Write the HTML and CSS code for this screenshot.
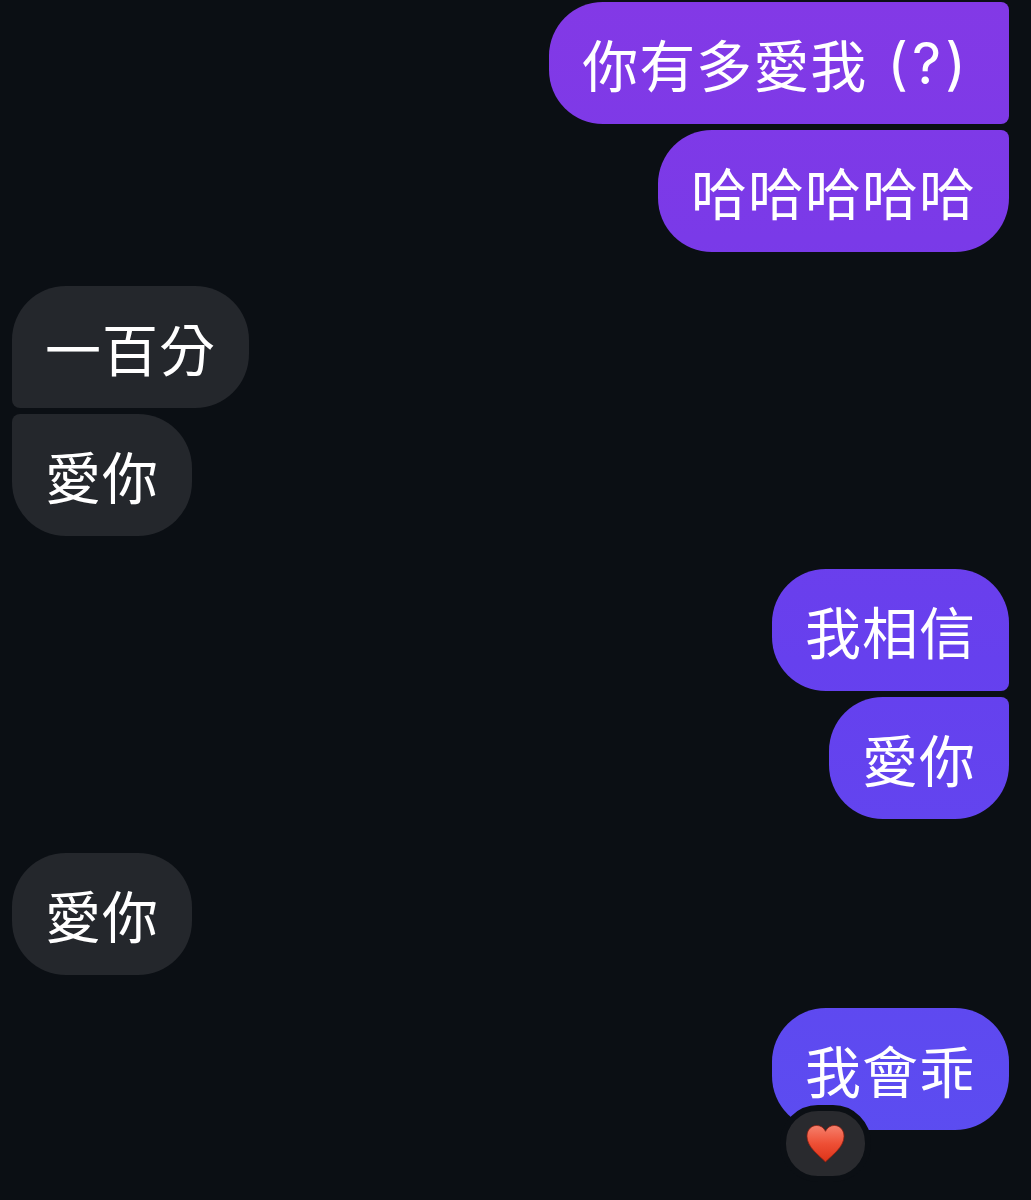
FILE: index.html
```html
<!DOCTYPE html>
<html lang="zh-Hant">
<head>
<meta charset="utf-8">
<title>Messages</title>
<link rel="stylesheet" href="styles.css">
</head>
<body>
<main class="thread">
  <section class="group group-sent">
    <div class="bubble sent first continued">你有多愛我<span class="latin">(?)</span></div>
    <div class="bubble sent last">哈哈哈哈哈</div>
  </section>
  <section class="group group-received">
    <div class="bubble received first">一百分</div>
    <div class="bubble received last">愛你</div>
  </section>
  <section class="group group-sent">
    <div class="bubble sent first">我相信</div>
    <div class="bubble sent last">愛你</div>
  </section>
  <section class="group group-received">
    <div class="bubble received">愛你</div>
  </section>
  <section class="group group-sent">
    <div class="bubble sent has-reaction">我會乖<span class="reaction"><svg class="heart" viewBox="0 0 40 40" aria-label="heart">
          <defs>
            <linearGradient id="heartFill" x1="0" y1="0" x2="0" y2="1">
              <stop offset="0" stop-color="#f6806c"/>
              <stop offset="0.5" stop-color="#ee4f35"/>
              <stop offset="1" stop-color="#dc3318"/>
            </linearGradient>
          </defs>
          <path d="M20 39C14 32.500 1 24 1 12.500C1 6 5.500 1.500 11 1.500C15 1.500 18.300 3.800 20 7.500C21.700 3.800 25 1.500 29 1.500C34.500 1.500 39 6 39 12.500C39 24 26 32.500 20 39Z" fill="url(#heartFill)" stroke="#8f1d10" stroke-width="0.8"/>
        </svg></span></div>
  </section>
</main>
</body>
</html>
```
FILE: styles.css
```css
html, body {
  margin: 0;
  height: 100%;
}

body {
  background: #0b0f14;
  font-family: "Noto Sans CJK TC", "Liberation Sans", sans-serif;
  color: #ffffff;
  overflow: hidden;
}

.thread {
  display: flex;
  flex-direction: column;
  gap: 33.5px;
  padding: 2px 22px 0 12px;
}

.group {
  display: flex;
  flex-direction: column;
  gap: 6px;
}

.group-sent {
  align-items: flex-end;
}

.group-received {
  align-items: flex-start;
}

.bubble {
  box-sizing: border-box;
  height: 122px;
  padding: 0 33px;
  display: flex;
  align-items: center;
  font-size: 56px;
  letter-spacing: 1px;
  font-weight: 400;
  line-height: 1;
  white-space: nowrap;
  border-radius: 54px;
}

.latin {
  font-family: "Inter", "Liberation Sans", sans-serif;
  font-size: 57px;
  font-weight: 400;
  letter-spacing: 4px;
  margin-left: 20px;
  margin-right: 6px;
}

.sent {
  background: linear-gradient(180deg, #8339e6 0%, #7a3ae8 20%, #6640ee 55%, #5a4ef1 100%) fixed;
}

.received {
  background: #24272c;
}

.sent.first {
  border-bottom-right-radius: 8px;
}

.sent.continued,
.sent.last {
  border-top-right-radius: 8px;
}

.received.first {
  border-bottom-left-radius: 8px;
}

.received.last {
  border-top-left-radius: 8px;
}

.has-reaction {
  position: relative;
}

.reaction {
  position: absolute;
  left: 8px;
  top: 97px;
  width: 79px;
  height: 65px;
  border: 6px solid #0b0f14;
  border-radius: 38px;
  background: #292a2e;
  display: flex;
  align-items: center;
  justify-content: center;
}

.heart {
  width: 39px;
  height: 39px;
}
```
